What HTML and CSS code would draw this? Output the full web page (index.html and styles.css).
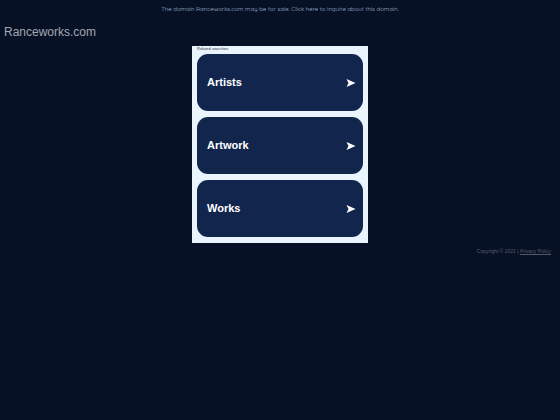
FILE: index.html
```html
<!DOCTYPE html>
<html lang="en">
<head>
<meta charset="utf-8">
<meta name="viewport" content="width=device-width, initial-scale=1">
<title>Ranceworks.com</title>
<link rel="stylesheet" href="styles.css">
</head>
<body>
<header>
  <p class="sale"><a href="#">The domain Ranceworks.com may be for sale. Click here to inquire about this domain.</a></p>
  <h1 class="domain">Ranceworks.com</h1>
</header>
<main class="panel">
  <h2 class="panel-title">Related searches</h2>
  <nav class="links">
    <a class="card" href="#"><span>Artists</span><svg class="arrow" viewBox="0 0 10 8" aria-hidden="true"><path d="M0.5 0 L9.5 4 L0.5 8 L2.5 4 Z"/></svg></a>
    <a class="card" href="#"><span>Artwork</span><svg class="arrow" viewBox="0 0 10 8" aria-hidden="true"><path d="M0.5 0 L9.5 4 L0.5 8 L2.5 4 Z"/></svg></a>
    <a class="card" href="#"><span>Works</span><svg class="arrow" viewBox="0 0 10 8" aria-hidden="true"><path d="M0.5 0 L9.5 4 L0.5 8 L2.5 4 Z"/></svg></a>
  </nav>
</main>
<footer class="footer">Copyright © 2021 | <a href="#">Privacy Policy</a></footer>
</body>
</html>
```
FILE: styles.css
```css
body {
  margin: 0;
  background: #071126;
  color: #a3a8b1;
  font-family: "Liberation Sans", Arial, sans-serif;
}

a {
  color: inherit;
}

.sale {
  margin: 0;
  padding-top: 4px;
  color: #9db1cb;
  font-family: Quicksand, Lato, sans-serif;
  font-size: 6px;
  line-height: 10px;
  text-align: center;
}

.sale a {
  text-decoration: none;
}

.domain {
  margin: 0;
  padding: 10px 4px 0;
  font-size: 12px;
  font-weight: 400;
  line-height: 16px;
}

.panel {
  box-sizing: border-box;
  max-width: 176px;
  margin: 6px auto 0;
  padding: 0 5px 6px;
  background: #eaf4fc;
}

.panel-title {
  margin: 0;
  padding-bottom: 2px;
  color: #33373f;
  font-size: 4px;
  font-weight: 400;
  line-height: 6px;
}

.links {
  display: grid;
  gap: 6px;
}

.card {
  display: flex;
  align-items: center;
  justify-content: space-between;
  padding: 22px 7px 22px 10px;
  border-radius: 11px;
  background: #12264d;
  color: #fff;
  font-size: 11px;
  font-weight: 700;
  line-height: 13px;
  text-decoration: none;
}

.arrow {
  width: 10px;
  height: 8px;
  fill: #fff;
}

.footer {
  padding: 4px 9px 0;
  color: #555b66;
  font-size: 5px;
  line-height: 8px;
  text-align: right;
}
```
